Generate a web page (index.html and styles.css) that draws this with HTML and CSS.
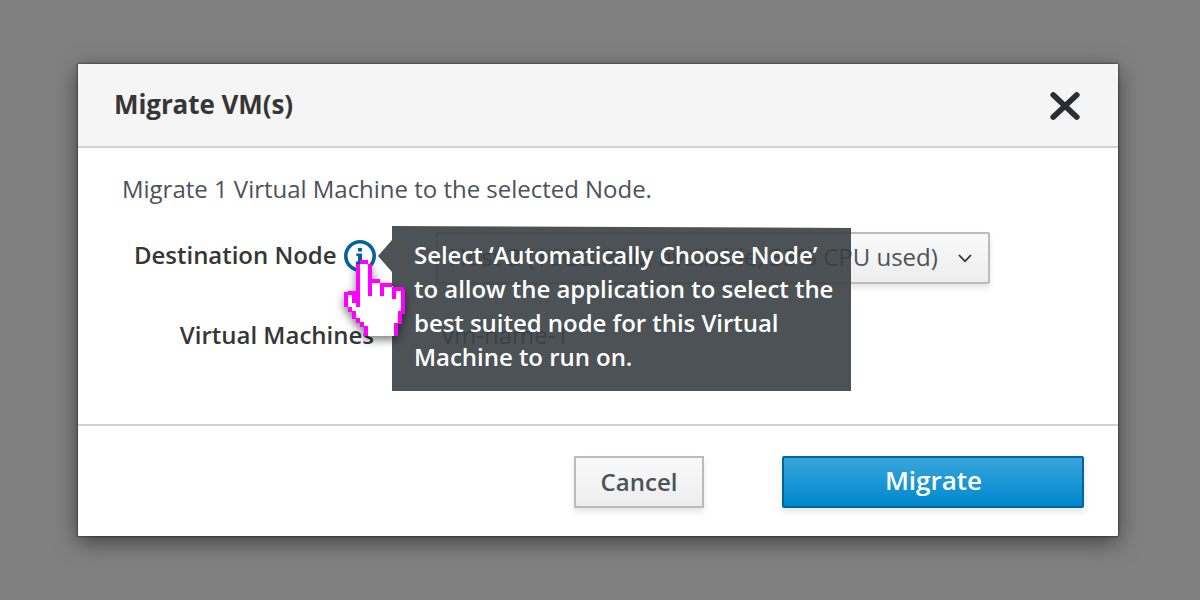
FILE: index.html
```html
<!DOCTYPE html>
<html lang="en">
<head>
<meta charset="utf-8">
<title>Migrate VM(s)</title>
<link rel="stylesheet" href="styles.css">
</head>
<body>
<div class="modal" role="dialog">
  <header class="modal-header">
    <h1 class="title"><span>Migrate VM(s)</span></h1>
    <svg class="close" width="30" height="28" viewBox="0 0 30 28"><path d="M3.3 3L26.7 25M26.7 3L3.3 25" stroke="#292e34" stroke-width="5.8" stroke-linecap="round"/></svg>
  </header>
  <main class="modal-body">
    <p class="intro"><span>Migrate 1 Virtual Machine to the selected Node.</span></p>
    <div class="row row-node">
      <label class="label"><span class="dest">Destination Node</span></label>
      <div class="info">
        <svg width="32" height="32" viewBox="0 0 32 32"><circle cx="16" cy="16" r="14.2" fill="none" stroke="#00659c" stroke-width="3.6"/><path d="M14 8h4v3.6h-4zM12.3 13.6H18v8h2V24h-8v-2.4h2V16h-1.7z" fill="#00659c"/></svg>
        <div class="tooltip">
          <svg class="tooltip-shape" width="473" height="165" viewBox="0 0 473 165"><path d="M14 0L473 2V165H14V46L0 30L14 14Z" fill="#393f44" fill-opacity=".9"/></svg>
          <div class="tooltip-text"><div class="t1">Select ‘Automatically Choose Node’</div><div class="t2">to allow the application to select the</div><div class="t3">best suited node for this Virtual</div><div class="t4">Machine to run on.</div></div>
        </div>
        <svg class="cursor" width="62" height="76" viewBox="0 0 62 76" shape-rendering="crispEdges">
          <path fill="#fff" d="M16 3H25V22H37V26H49V30H57V54H54V63H50V76H24V66H20V62H16V58H12V51H8V47H4V35H12V40H16Z"/>
          <path fill="#f0f" d="M16 0h8v4h-8zM12 4h4v43h-4zM24 4h4v32h-4zM28 19h8v4h-8zM36 23h4v13h-4zM40 23h8v4h-8zM48 27h4v12h-4zM52 27h8v4h-8zM57 30h4v24h-4zM54 51h4v13h-4zM50 63h4v13h-4zM4 31h8v4h-8zM0 32h4v15h-4zM8 35h4v8h-4zM4 47h4v5h-4zM8 51h4v8h-4zM12 58h4v5h-4zM16 62h4v5h-4zM20 66h4v10h-4z"/>
        </svg>
      </div>
      <div class="select"><span class="value">Host 3 (16GB RAM available, 33% CPU used)</span><svg class="chevron" width="14" height="9" viewBox="0 0 14 9"><path d="M1 1L7 7.3L13 1" fill="none" stroke="#292e34" stroke-width="1.8"/></svg></div>
    </div>
    <div class="row row-vm">
      <span class="label vm-label"><span class="vms">Virtual Machines</span></span>
      <span class="vm-name">vm-name-1</span>
    </div>
  </main>
  <footer class="modal-footer">
    <button class="btn cancel"><span>Cancel</span></button>
    <button class="btn primary"><span>Migrate</span></button>
  </footer>
</div>
</body>
</html>
```
FILE: styles.css
```css
* { box-sizing: border-box; }
body {
  margin: 0;
  width: 1200px;
  height: 600px;
  padding: 64px 82px 64px 78px;
  overflow: hidden;
  background: #808080;
  font: 24px/34px "Open Sans", sans-serif;
  color: #4d5258;
}
.modal {
  height: 472px;
  display: flex;
  flex-direction: column;
  background: #fff;
  border-radius: 1px;
  box-shadow: 0 0 2px 1px rgba(0, 0, 0, .35), 0 6px 22px rgba(0, 0, 0, .5);
}
.modal-header {
  height: 84px;
  display: flex;
  align-items: center;
  justify-content: space-between;
  padding: 0 38px 0 36px;
  background: #f5f5f5;
  border-bottom: 2px solid #d1d1d1;
  border-radius: 1px 1px 0 0;
}
.title { margin: 0 0 2px; font-size: 26px; font-weight: 700; letter-spacing: -.08px; color: #363636; }
.close { margin-top: 2px; overflow: visible; }
.modal-body { flex: 1; padding: 24px 0 0 44px; }
.intro { margin: 0 0 26px; letter-spacing: -.02px; }
.row { display: flex; }
.row-node { height: 52px; align-items: center; }
.label { font-weight: 600; color: #363636; }
.row-node .label { width: 222px; padding: 0 8px 7px 12px; white-space: nowrap; letter-spacing: -.03px; }
.info { position: relative; width: 32px; height: 32px; margin-bottom: 4px; }
.tooltip { position: absolute; z-index: 2; left: 34px; top: -14px; width: 473px; height: 165px; }
.tooltip-shape { position: absolute; left: 0; top: 0; }
.tooltip-text { position: relative; padding: 12px 0 0 36px; color: #fff; font-weight: 600; letter-spacing: -.04px; white-space: nowrap; }
.cursor { position: absolute; z-index: 3; left: 0; top: 20px; filter: drop-shadow(0 4px 4px rgba(0, 0, 0, .5)); }
.select {
  width: 554px;
  height: 52px;
  margin-left: 60px;
  padding: 0 16px 2px 11px;
  display: flex;
  align-items: center;
  justify-content: space-between;
  border: 2px solid #bbb;
  border-radius: 2px;
  background: linear-gradient(#fafafa, #ededed);
  box-shadow: 0 4px 6px rgba(3, 3, 3, .1);
  white-space: nowrap;
}
.chevron { margin-top: 3px; }
.row-vm { margin-top: 34px; }
.vm-label { width: 252px; text-align: right; }
.vm-name { margin-left: 68px; }
.modal-footer {
  height: 112px;
  padding: 30px 34px 0 0;
  display: flex;
  justify-content: flex-end;
  gap: 78px;
  border-top: 2px solid #d1d1d1;
}
.btn { height: 52px; padding: 0; font: 600 24px/34px "Open Sans", sans-serif; border-radius: 2px; box-shadow: 0 4px 6px rgba(3, 3, 3, .1); }
.cancel { width: 130px; border: 2px solid #bbb; color: #4d5258; background: linear-gradient(#fafafa, #ededed); border-radius: 0; }
.primary { width: 302px; padding: 0 0 5px 1px; border: 2px solid #00659c; color: #fff; font-size: 26px; background: linear-gradient(#39a5dc, #0088ce); }
```
